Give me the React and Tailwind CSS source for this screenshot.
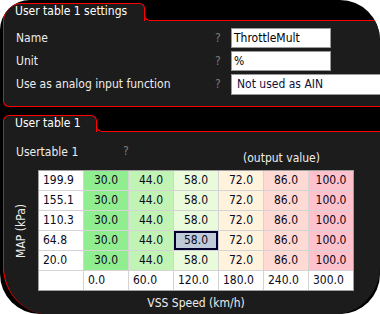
const rowsData = [
    ['199.9', ['30.0', '44.0', '58.0', '72.0', '86.0', '100.0']],
    ['155.1', ['30.0', '44.0', '58.0', '72.0', '86.0', '100.0']],
    ['110.3', ['30.0', '44.0', '58.0', '72.0', '86.0', '100.0']],
    ['64.8', ['30.0', '44.0', '58.0', '72.0', '86.0', '100.0']],
    ['20.0', ['30.0', '44.0', '58.0', '72.0', '86.0', '100.0']],
]

const colBg = ['bg-[#90ee90]', 'bg-[#c1f3b4]', 'bg-[#e9fbdb]', 'bg-[#fff3de]', 'bg-[#ffdad5]', 'bg-[#ffc1cb]']
const xAxis = ['0.0', '60.0', '120.0', '180.0', '240.0', '300.0']

function Tab({ label, width, height, topLeft }) {
    return (
        <div className="flex" style={{ height }}>
            <div
                className={`shrink-0 border border-b-0 border-[#ff0000] rounded-tr-[6px] bg-[#1c1c1c] pl-[11px] leading-[15px] text-white ${topLeft}`}
                style={{ width }}
            >
                {label}
            </div>
            <div className="flex-1 mt-[9px] -ml-px border-l border-b border-[#ff0000] rounded-bl-[6px]" />
        </div>
    )
}

function SettingRow({ label, children }) {
    return (
        <div className="flex items-center h-[20px]">
            <div className="w-[199px] shrink-0">{label}</div>
            <div className="w-[16px] shrink-0 text-[#7c7c7c]">?</div>
            {children}
        </div>
    )
}

export default function App() {
    return (
        <div className="w-[380px] h-[314px] bg-white">
            <div className="h-full bg-black rounded-tl-[30px] rounded-tr-[40px] rounded-b-[40px] overflow-hidden pt-[3px] pl-[3px] text-[12px] text-[#ececec] font-['DejaVu_Sans_Condensed','DejaVu_Sans',sans-serif]">
                <div className="w-[420px]">
                    <Tab label="User table 1 settings" width={142} height={18} topLeft="rounded-tl-[20px]" />
                    <div className="bg-[#1c1c1c] border-l border-b border-[#ff0000] rounded-bl-[6px] pt-[7px] pb-[12px] pl-[12px] flex flex-col gap-[3px]">
                        <SettingRow label="Name">
                            <div className="w-[100px] h-[20px] bg-white border border-[#9a9a9a] pl-[2px] leading-[18px] text-black">ThrottleMult</div>
                        </SettingRow>
                        <SettingRow label="Unit">
                            <div className="w-[100px] h-[20px] bg-white border border-[#9a9a9a] pl-[2px] leading-[18px] text-black">%</div>
                        </SettingRow>
                        <SettingRow label="Use as analog input function">
                            <div className="w-[180px] h-[21px] bg-white border border-[#9a9a9a] pl-[5px] leading-[19px] text-[#10103a]">Not used as AIN</div>
                        </SettingRow>
                    </div>
                </div>

                <div className="mt-[8px] w-[377px]">
                    <Tab label="User table 1" width={94} height={17} topLeft="rounded-tl-[6px]" />
                    <div className="h-[183px] bg-[#1c1c1c] border-l border-[#ff0000] rounded-bl-[48px] rounded-br-[48px]">
                        <div className="flex h-[38px] pl-[12px]">
                            <div className="w-[107px] mt-[12px] leading-[16px]">Usertable 1</div>
                            <div className="w-[120px] mt-[11px] leading-[16px] text-[#7c7c7c]">?</div>
                            <div className="mt-[18px] leading-[16px]">(output value)</div>
                        </div>
                        <div className="flex">
                            <div className="w-[34px] flex items-center justify-center">
                                <div className="[writing-mode:vertical-rl] rotate-180 leading-[14px]">MAP (kPa)</div>
                            </div>
                            <div className="grid grid-cols-[repeat(7,44px)] grid-rows-[repeat(6,19px)] gap-px bg-[#d4d4d4] border border-[#a0a0a0] text-[#0a0a20]">
                                {rowsData.map(([y, vals], r) => (
                                    <div key={y} className="contents">
                                        <div className="bg-white pl-[4px] leading-[19px]">{y}</div>
                                        {vals.map((v, c) =>
                                            r === 3 && c === 2 ? (
                                                <div key={c} className="bg-[#c0cbd9] border-2 border-[#00002e] text-center leading-[15px]">{v}</div>
                                            ) : (
                                                <div key={c} className={`${colBg[c]} text-center leading-[19px]`}>{v}</div>
                                            )
                                        )}
                                    </div>
                                ))}
                                <div className="bg-white" />
                                {xAxis.map((x) => (
                                    <div key={x} className="bg-white pl-[4px] leading-[19px]">{x}</div>
                                ))}
                            </div>
                        </div>
                        <div className="ml-[34px] w-[316px] text-center mt-[4px] leading-[16px]">VSS Speed (km/h)</div>
                    </div>
                </div>
            </div>
        </div>
    )
}
